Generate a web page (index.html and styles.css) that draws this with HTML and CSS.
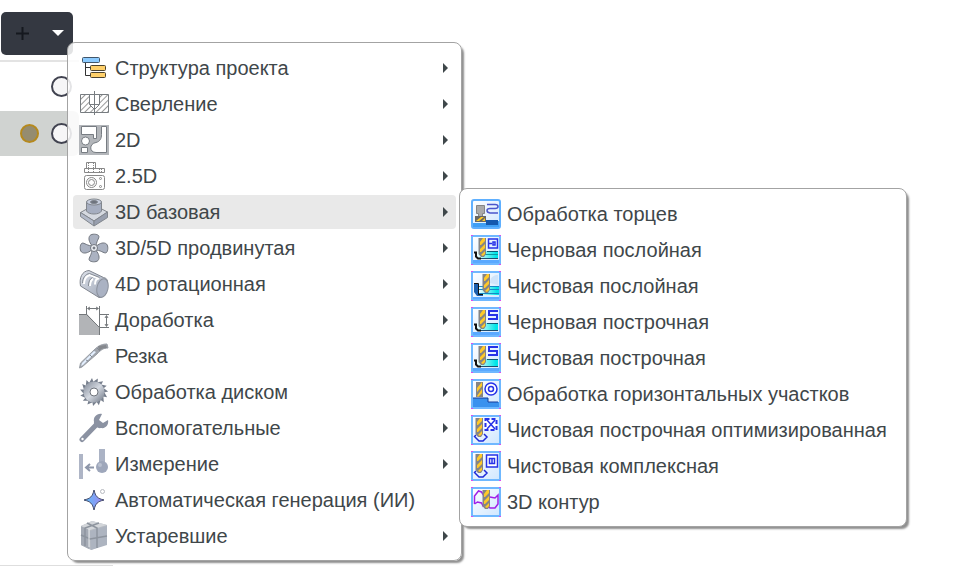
FILE: index.html
```html
<!DOCTYPE html>
<html lang="ru">
<head>
<meta charset="utf-8">
<title>Операции</title>
<link rel="stylesheet" href="styles.css">
</head>
<body>
<svg class="defs" aria-hidden="true">
  <defs>
    <linearGradient id="steel" x1="0" y1="0" x2="1" y2="1"><stop offset="0" stop-color="#7f8795"/><stop offset=".5" stop-color="#d3d8e0"/><stop offset="1" stop-color="#6f7785"/></linearGradient>
    <linearGradient id="body" x1="0" y1="0" x2="1" y2="1"><stop offset="0" stop-color="#dde1e9"/><stop offset="1" stop-color="#9ba4b5"/></linearGradient>
    <linearGradient id="star" x1="0" y1="0" x2="1" y2="0"><stop offset="0" stop-color="#5cc0f8"/><stop offset="1" stop-color="#a283f2"/></linearGradient>
    <linearGradient id="sky" x1="0" y1="0" x2="1" y2="1"><stop offset="0" stop-color="#fff"/><stop offset="1" stop-color="#cfe7ff"/></linearGradient>
    <linearGradient id="sea" x1="0" y1="0" x2="1" y2="0"><stop offset="0" stop-color="#f4ffff"/><stop offset=".9" stop-color="#00e5e8"/></linearGradient>
    <pattern id="hatch" width="4" height="4" patternUnits="userSpaceOnUse" patternTransform="rotate(45)"><rect width="1" height="4" fill="#999"/></pattern>
    <g id="frame"><rect x="1" y="1" width="28" height="28" fill="url(#sky)" stroke="#6fb8ff" stroke-width="2"/><path d="M0 0h2v1H0zM28 0h2v1h-2zM0 29h2v1H0zM28 29h2v1h-2z" fill="#d94df0"/></g>
    <g id="bit"><path d="M7.500 3h7.500v16l-2 3h-3l-2.500-3z" fill="#858585"/><path d="M9 7l3-4h2v3l-4 4H9zM9 14l5-5v4l-4 4H9zM10 20l4-4v3l-2 2z" fill="#ffc928"/></g>
    <g id="pool"><path d="M2 25h26v3H2z" fill="#5aa9ff"/><path d="M6 16h21v7H6z" fill="url(#sea)"/><path d="M16 16.500h11" stroke="#0c5b78"/><path d="M8 23.500h19" stroke="#1d4d70"/><path d="M3 17.500h2v4l2 2h3" fill="none" stroke="#111" stroke-width="2"/></g>
    <path id="zigzag" d="M27 4h-9v4h8v4h-9" fill="none" stroke="#2632e8" stroke-width="2"/>
    <path id="bow" d="M4 22l4 4h4l4-4-3-3M5 20l-2 2" fill="none" stroke="#1d2ad8" stroke-width="1.500"/>
  </defs>
</svg>

<main class="workspace">
  <button class="add" type="button" aria-label="Добавить">
    <svg class="add-icons" viewBox="0 0 72 43"><path d="M15 21.500h13M21.500 15v13" stroke="#15181f" stroke-width="2"/><path d="M51 18h12l-6 6z" fill="#fff"/></svg>
  </button>
  <div class="list">
    <div class="row"><input class="pick" type="radio" name="op" aria-label="Первая операция"></div>
    <div class="row current"><span class="dot"></span><input class="pick" type="radio" name="op" aria-label="Вторая операция"></div>
  </div>
  <div class="rule"></div>
</main>

<nav class="menu main-menu" aria-label="Операции">
  <button class="item more" type="button"><svg class="icon" viewBox="0 0 30 30"><path d="M6.500 10v12.500h5M6.500 14.500h5" fill="none" stroke="#333"/><rect x="3.500" y="4.500" width="17" height="5" rx="1" fill="#8ccbff" stroke="#41566a"/><rect x="11.500" y="12.500" width="15" height="5" rx="1" fill="#ffd06a" stroke="#4b422e"/><rect x="11.500" y="19.500" width="15" height="5" rx="1" fill="#ffd06a" stroke="#4b422e"/></svg><span>Структура проекта</span></button>
  <button class="item more" type="button"><svg class="icon" viewBox="0 0 30 30"><path d="M1.500 5.500h28v18h-28z" fill="url(#hatch)" stroke="#777c80"/><path d="M10.500 5.500v10l5 5 5-5v-10z" fill="#fff" stroke="#777c80"/><path d="M10.500 15.500h10M15.500 2v24" stroke="#777c80" fill="none"/></svg><span>Сверление</span></button>
  <button class="item more" type="button"><svg class="icon" viewBox="0 0 30 30"><path d="M0 0h30v30H0z" fill="#b3b6ba"/><g fill="#fff" stroke="#777c82"><path d="M2.500 1.500h15v12h-3v-4h-12z"/><circle cx="6.500" cy="16" r="4"/><path d="M2.500 22.500h6v5h-6zM22.500 1.500h5v26H17c-7 0-7-9 0-10 4-1 5.500-4 5.500-8z"/></g></svg><span>2D</span></button>
  <button class="item more" type="button"><svg class="icon" viewBox="0 0 30 30"><g fill="#fff" stroke="#888"><path d="M7.500 7.500v-6h9v6M5.500 7.500h20v4h-20z"/><rect x="5.500" y="14.500" width="20" height="14" rx="2"/><circle cx="12.500" cy="21.500" r="5"/><circle cx="12.500" cy="21.500" r="3"/><circle cx="21.500" cy="17.500" r="1"/><circle cx="21.500" cy="25.500" r="1"/><path d="M9.500 2v9M14.500 2v9M20.500 8v3M22.500 8v3" stroke-dasharray="1 1" fill="none"/></g></svg><span>2.5D</span></button>
  <button class="item more selected" type="button"><svg class="icon" viewBox="0 0 30 30"><g stroke="#81868d"><path d="M1.500 15.500L15 8l13.500 7L15 24z" fill="#d5d9e0"/><path d="M1.500 15.500L15 24v5L1.500 19.500z" fill="#b3bac9"/><path d="M28.500 15L15 24v5l13.500-8.500z" fill="#989fae"/><path d="M7.500 5v9c2 4 13 4 15 0V5z" fill="#a6aec0"/><ellipse cx="15" cy="5" rx="7.500" ry="3" fill="#c8cfdf"/><ellipse cx="15" cy="5" rx="3.500" ry="1.500" fill="#6c727d"/></g></svg><span>3D базовая</span></button>
  <button class="item more" type="button"><svg class="icon" viewBox="0 0 30 30"><g fill="#abb2c1" stroke="#70757e"><path id="blade" d="M13 12.500C10 9 9 5 11 2.500c2-2 7-1.500 8.500 0 1.500 2-1.500 4-2.500 10z"/><use href="#blade" transform="rotate(90 15 15)"/><use href="#blade" transform="rotate(180 15 15)"/><use href="#blade" transform="rotate(270 15 15)"/><circle cx="15" cy="15" r="3.500" fill="#eceff3"/><circle cx="15" cy="15" r="1" fill="#70757e"/></g></svg><span>3D/5D продвинутая</span></button>
  <button class="item more" type="button"><svg class="icon" viewBox="0 0 30 30"><path d="M10 1.500C3 2 0 9 1.500 17L20 28.500c7 1 9-10 8.500-17-1-2-2-2.500-4-3z" fill="url(#body)" stroke="#81868f"/><ellipse cx="23.500" cy="19" rx="5.500" ry="9.500" fill="#aab2c3" stroke="#8b919c" transform="rotate(12 23.500 19)"/><path d="M5 15c0-5 2-8 6-9l9 3.500c-3 0-4 3-4 6M11 17c0-4 1-6 3-7" fill="none" stroke="#fff" stroke-width="2"/><path d="M3.500 14c0-5 3-9 7-9.500l10 4M9.500 17c0-4 1-7 4-8.500" fill="none" stroke="#858b94"/></svg><span>4D ротационная</span></button>
  <button class="item more" type="button"><svg class="icon" viewBox="0 0 30 30"><path d="M0 9h8l12 13v8H0z" fill="#b2b4b7"/><path d="M0 9.500h8M7.500 9.500l13 13V30M7.500 9.500V1M20.500 1v21.500H30M20.500 9.500H30M9 3.500h10M27.500 11v10M11 2L8.500 3.500 11 5M17 2l2.500 1.500L17 5M26 13l1.500-2.500L29 13M26 19l1.500 2.500L29 19" fill="none" stroke="#74787b"/></svg><span>Доработка</span></button>
  <button class="item more" type="button"><svg class="icon" viewBox="0 0 30 30"><path d="M.5 27l1-5L15 9c5-5 9-6 13-6l1 4c-5 0-7 2-11 6L3 26z" fill="#a0a4ab" stroke="#999ea6"/><path d="M2 25l1-3L15 10l2 1L4 24z" fill="#e3efff"/><path d="M7 19l2 1M11 14l2 2M18 7l3 3" stroke="#848b95"/><path d="M19 5l8-1 1 3c-4 0-6 1-8 3z" fill="#85888d"/></svg><span>Резка</span></button>
  <button class="item more" type="button"><svg class="icon" viewBox="0 0 30 30"><g fill="#777f8d"><path id="tooth" d="M10 6l3-5 1.500 4 4 1z"/><use href="#tooth" transform="rotate(24 15 15)"/><use href="#tooth" transform="rotate(48 15 15)"/><use href="#tooth" transform="rotate(72 15 15)"/><use href="#tooth" transform="rotate(96 15 15)"/><use href="#tooth" transform="rotate(120 15 15)"/><use href="#tooth" transform="rotate(144 15 15)"/><use href="#tooth" transform="rotate(168 15 15)"/><use href="#tooth" transform="rotate(192 15 15)"/><use href="#tooth" transform="rotate(216 15 15)"/><use href="#tooth" transform="rotate(240 15 15)"/><use href="#tooth" transform="rotate(264 15 15)"/><use href="#tooth" transform="rotate(288 15 15)"/><use href="#tooth" transform="rotate(312 15 15)"/><use href="#tooth" transform="rotate(336 15 15)"/></g><circle cx="15" cy="15" r="10.500" fill="url(#steel)"/><circle cx="15" cy="15" r="4" fill="#fff" stroke="#70757d"/></svg><span>Обработка диском</span></button>
  <button class="item more" type="button"><svg class="icon" viewBox="0 0 30 30"><path d="M3 26.500L18 11" stroke="#8b92a2" stroke-width="5" stroke-linecap="round"/><path d="M23 1c-5-1-9 3-8 8-1 3 4 7 7 6 5 1 8-4 7-8l-5 3-4-3z" fill="#8b92a2"/><circle cx="3.500" cy="26" r="1.200" fill="#fff"/></svg><span>Вспомогательные</span></button>
  <button class="item more" type="button"><svg class="icon" viewBox="0 0 30 30"><path d="M0 5h4v25H0z" fill="#aeb5c6"/><path d="M15 18.500H8M11 15l-4 3.500 4 3.500" fill="none" stroke="#8d96a9" stroke-width="2"/><path d="M20 0h6v13h-6z" fill="#abb3c5"/><circle cx="23" cy="18" r="6" fill="#9ea7bb"/><circle cx="21" cy="16" r="2" fill="#bac1d0"/></svg><span>Измерение</span></button>
  <button class="item" type="button"><svg class="icon" viewBox="0 0 30 30"><path d="M15 5c1.500 6.500 3.500 8.500 10 10-6.500 1.500-8.500 3.500-10 10-1.500-6.500-3.500-8.500-10-10 6.500-1.500 8.500-3.500 10-10z" fill="url(#star)" stroke="#41496a"/><circle cx="23.500" cy="6.500" r="2" fill="#fff" stroke="#b7bac0"/></svg><span>Автоматическая генерация (ИИ)</span></button>
  <button class="item more" type="button"><svg class="icon" viewBox="0 0 30 30"><path d="M2 5l11-5 15 4v19l-16 6-10-5z" fill="#b5bac2"/><path d="M2 5l8 4v19l-8-4z" fill="#a4aab4"/><path d="M11 10l17-5v19l-16 5z" fill="#adb4c0"/><path d="M2 5l11-5 15 4-17 5z" fill="#d3d6da"/><path d="M2 14l9 4 17-3M8 2l10 5v20M20 2L6 7v18" fill="none" stroke="#8d949e" stroke-width="1.500"/><path d="M10 8v18" stroke="#e9ebee"/></svg><span>Устаревшие</span></button>
</nav>

<nav class="menu sub-menu" aria-label="3D базовая">
  <button class="item" type="button"><svg class="icon" viewBox="0 0 30 30"><rect x="1" y="1" width="28" height="28" rx="2" fill="url(#sky)" stroke="#5fb0ff" stroke-width="2"/><path d="M2 24h13v-2h13v6H2z" fill="#3f9ff5"/><path d="M15 21h12v5H15z" fill="#1458ae"/><path d="M5.500 6.500h8v8h-2v3h-4v-3h-2z" fill="#aaa" stroke="#858585"/><path d="M4 17h11v6H4z" fill="#666"/><path d="M5 22l5-4h3l-5 4zM11 22l3-3v3z" fill="#ffcb27"/><path d="M16 5.500h8q3 0 3 2t-3 2h-5q-3 0-3 2t3 2.500h8" fill="none" stroke="#4a56cc" stroke-width="1.500"/></svg><span>Обработка торцев</span></button>
  <button class="item" type="button"><svg class="icon" viewBox="0 0 30 30"><use href="#frame"/><use href="#pool"/><path d="M8 19.500h19" stroke="#0b9aa5"/><use href="#bit"/><path d="M17.500 4h9v9h-9zM18 8.500h3M22 7h2v3h-2z" fill="none" stroke="#2632e8" stroke-width="1.500"/></svg><span>Черновая послойная</span></button>
  <button class="item" type="button"><svg class="icon" viewBox="0 0 30 30"><use href="#frame"/><path d="M19 12c0-7 5-8 8-8v10z" fill="#cfe4fa"/><path d="M8 15h20v9H8z" fill="url(#sea)"/><path d="M8 15.500h20M8 18.500h20M8 22.500h20" stroke="#1689c5"/><path d="M2 26h26v2H2z" fill="#5aa9ff"/><path d="M3 13h5v10h4v2H6l-3-4z" fill="#1b5eac"/><path d="M3 12.500h4.500v11H12" fill="none" stroke="#111"/><use href="#bit" x="4"/></svg><span>Чистовая послойная</span></button>
  <button class="item" type="button"><svg class="icon" viewBox="0 0 30 30"><use href="#frame"/><use href="#pool"/><use href="#bit"/><use href="#zigzag"/></svg><span>Черновая построчная</span></button>
  <button class="item" type="button"><svg class="icon" viewBox="0 0 30 30"><use href="#frame"/><use href="#pool"/><use href="#bit"/><use href="#zigzag"/></svg><span>Чистовая построчная</span></button>
  <button class="item" type="button"><svg class="icon" viewBox="0 0 30 30"><use href="#frame"/><path d="M2 19h15v4h11v5H2z" fill="#3a92ee"/><path d="M2 19h15v4h10" fill="none" stroke="#123b9a"/><path d="M5 3h7v15H5z" fill="#858585"/><path d="M6 9l5-6v4l-5 6zM6 17l5-7v4l-4 4z" fill="#ffc928"/><circle cx="20" cy="10" r="6" fill="#fff" stroke="#2632e8" stroke-width="1.500"/><circle cx="20" cy="10" r="2.500" fill="none" stroke="#2632e8" stroke-width="1.500"/></svg><span>Обработка горизонтальных участков</span></button>
  <button class="item" type="button"><svg class="icon" viewBox="0 0 30 30"><use href="#frame"/><use href="#bow"/><use href="#bit" x="-3"/><path d="M14.500 4h11v11h-11z" fill="#fff" stroke="#2632e8" stroke-width="2" stroke-dasharray="4 2"/><path d="M16 5l8 9M24 5l-8 9" stroke="#2632e8" stroke-width="1.500"/></svg><span>Чистовая построчная оптимизированная</span></button>
  <button class="item" type="button"><svg class="icon" viewBox="0 0 30 30"><use href="#frame"/><use href="#bow"/><use href="#bit" x="-3"/><path d="M15.500 4h11v12h-11zM18.500 7.500h5v5h-5zM21 8v4" fill="#fff" stroke="#2632e8" stroke-width="1.500"/></svg><span>Чистовая комплексная</span></button>
  <button class="item" type="button"><svg class="icon" viewBox="0 0 30 30"><use href="#frame"/><path d="M3.500 17V9l4-5 3 1 2 3M3.500 17l3-2 4 1 2 4M17 19l2 2h5l3-4V8l-3 3-5-1-2-2" fill="none" stroke="#a020e8" stroke-width="1.500"/><use href="#bit" x="4"/></svg><span>3D контур</span></button>
</nav>
</body>
</html>
```
FILE: styles.css
```css
* {
  box-sizing: border-box;
}

body {
  margin: 0;
  min-height: 100vh;
  background: #fff;
  color: #3f474a;
  font: 20px/24px "Liberation Sans", Arial, sans-serif;
}

.defs {
  position: absolute;
  width: 0;
  height: 0;
}

.workspace {
  display: flex;
  flex-direction: column;
  align-items: flex-start;
  min-height: 100vh;
  padding: 12px 0 22px;
}

.add {
  display: flex;
  margin-left: 1px;
  padding: 0;
  border: 0;
  border-radius: 5px;
  background: #343841;
}

.add-icons {
  width: 72px;
  height: 43px;
}

.list {
  width: 79px;
  margin-top: 5px;
  border-top: 2px solid #e3e3e3;
}

.row {
  display: flex;
  align-items: center;
  justify-content: flex-end;
  gap: 12px;
  height: 45px;
  padding-right: 7px;
}

.row:first-child {
  height: 49px;
}

.row.current {
  border-radius: 0 6px 6px 0;
  background: #d0d3d1;
}

.pick {
  appearance: none;
  width: 21px;
  height: 21px;
  margin: 0;
  border: 2px solid #414350;
  border-radius: 50%;
  background: #f6f6f7;
}

.dot {
  width: 19px;
  height: 19px;
  border: 2px solid #b5891e;
  border-radius: 50%;
  background: #958c70;
}

.rule {
  width: 113px;
  height: 1px;
  margin-top: auto;
  background: #dedede;
}

.menu {
  position: absolute;
  display: flex;
  flex-direction: column;
  gap: 2px;
  padding: 8px 5px 7px;
  border: 1px solid #a3a3a3;
  border-radius: 8px;
  background: rgba(255, 255, 255, 0.86);
  box-shadow: 3px 3px 2px -1px #8f8f8f;
}

.main-menu {
  top: 42px;
  left: 67px;
  width: 395px;
}

.sub-menu {
  top: 188px;
  left: 459px;
  width: 448px;
  background: #fff;
}

.item {
  display: flex;
  align-items: center;
  gap: 6px;
  height: 34px;
  padding: 0 8px 0 6px;
  border: 0;
  border-radius: 4px;
  background: none;
  color: inherit;
  font: inherit;
  text-align: left;
  white-space: nowrap;
}

.item.selected {
  background: #e9e9e9;
}

.more::after {
  content: "";
  margin-left: auto;
  border: solid transparent;
  border-width: 5px 0 5px 5px;
  border-left-color: #3f474a;
}

.icon {
  flex: none;
  width: 30px;
  height: 30px;
}
```
